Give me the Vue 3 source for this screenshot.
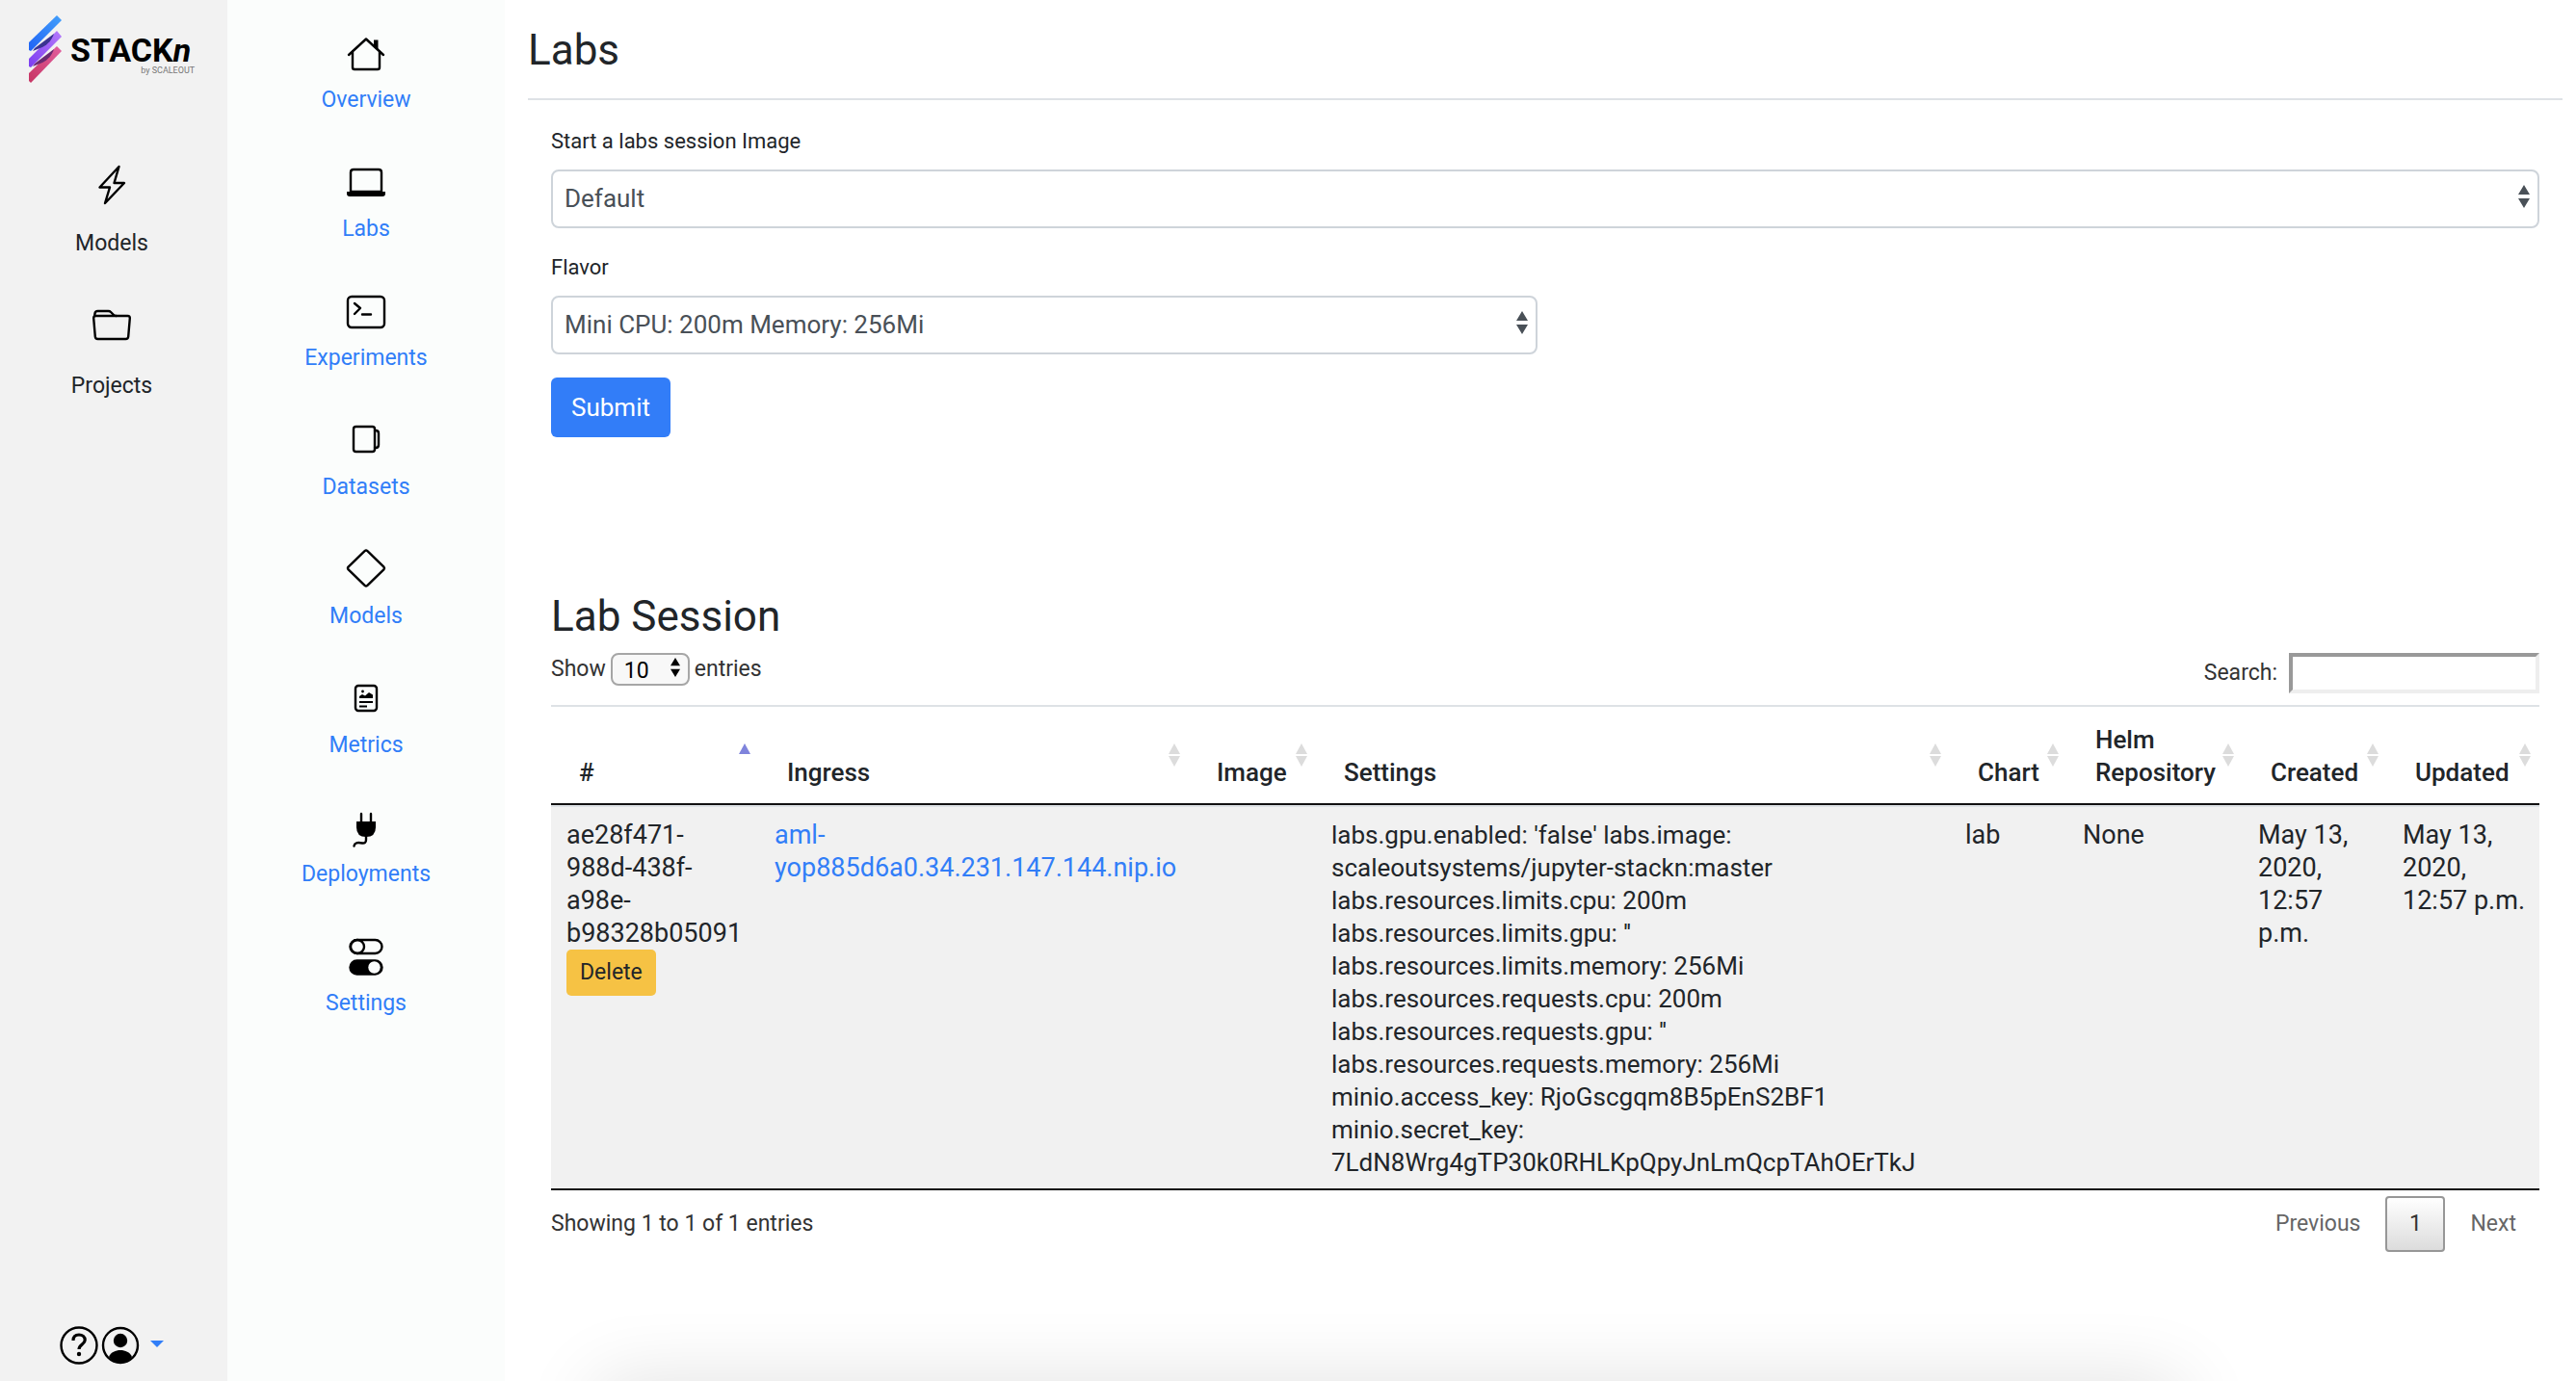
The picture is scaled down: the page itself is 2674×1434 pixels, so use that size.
<script setup>
import { ref } from 'vue'

const image = ref('Default')
const flavor = ref('Mini CPU: 200m Memory: 256Mi')
const pageLength = ref('10')
const search = ref('')

const projectLinks = [
  { label: 'Overview', icon: 'house' },
  { label: 'Labs', icon: 'laptop' },
  { label: 'Experiments', icon: 'terminal' },
  { label: 'Datasets', icon: 'collection' },
  { label: 'Models', icon: 'diamond' },
  { label: 'Metrics', icon: 'card' },
  { label: 'Deployments', icon: 'plug' },
  { label: 'Settings', icon: 'toggles' },
]

const columns = [
  { label: '#', key: 'id', sorted: true },
  { label: 'Ingress', key: 'ingress' },
  { label: 'Image', key: 'image' },
  { label: 'Settings', key: 'settings' },
  { label: 'Chart', key: 'chart' },
  { label: 'Helm\nRepository', key: 'helm' },
  { label: 'Created', key: 'created' },
  { label: 'Updated', key: 'updated' },
]

const sessions = [
  {
    id: 'ae28f471-\n988d-438f-\na98e-\nb98328b05091',
    ingress: 'aml-\nyop885d6a0.34.231.147.144.nip.io',
    image: '',
    settings: [
      "labs.gpu.enabled: 'false' labs.image:",
      'scaleoutsystems/jupyter-stackn:master',
      'labs.resources.limits.cpu: 200m',
      "labs.resources.limits.gpu: ''",
      'labs.resources.limits.memory: 256Mi',
      'labs.resources.requests.cpu: 200m',
      "labs.resources.requests.gpu: ''",
      'labs.resources.requests.memory: 256Mi',
      'minio.access_key: RjoGscgqm8B5pEnS2BF1',
      'minio.secret_key:',
      '7LdN8Wrg4gTP30k0RHLKpQpyJnLmQcpTAhOErTkJ',
    ].join('\n'),
    chart: 'lab',
    helm: 'None',
    created: 'May 13,\n2020,\n12:57\np.m.',
    updated: 'May 13,\n2020,\n12:57 p.m.',
  },
]
</script>

<template>
  <div class="app">
    <aside class="rail">
      <div>
        <a class="brand" href="#" aria-label="STACKn by SCALEOUT">
          <svg class="brand-mark" viewBox="30 14 36 74" aria-hidden="true">
            <defs>
              <linearGradient id="gBlue" x1="0" y1="1" x2="1" y2="0">
                <stop offset="0" stop-color="#1f62f5" /><stop offset="1" stop-color="#43a0fb" />
              </linearGradient>
              <linearGradient id="gPurple" x1="0" y1="1" x2="1" y2="0">
                <stop offset="0" stop-color="#7b3df0" /><stop offset="1" stop-color="#b57bfb" />
              </linearGradient>
              <linearGradient id="gPink" x1="0" y1="1" x2="1" y2="0">
                <stop offset="0" stop-color="#c73563" /><stop offset="1" stop-color="#e2609f" />
              </linearGradient>
            </defs>
            <path d="M59 48l5 5-32 33-2-2v-8z" fill="url(#gPink)" />
            <path d="M36 66l-2 3 10-4c6-3 10-8 12-14z" fill="#6a2a72" />
            <path d="M59 32l5 6-32 32-2-1v-8z" fill="url(#gPurple)" />
            <path d="M36 50l-2 3 10-4c6-3 10-8 12-14z" fill="#3a3391" />
            <path d="M59 16l5 5-32 32-2-1v-8z" fill="url(#gBlue)" />
          </svg>
          <span class="brand-text">
            <span class="brand-name">STACK<i>n</i></span>
            <span class="brand-by">by SCALEOUT</span>
          </span>
        </a>
        <nav class="rail-nav">
          <a class="rail-link" href="#">
            <svg class="icon" viewBox="0 0 40 40" aria-hidden="true">
              <path d="M27.500 1L7.500 22.500H18L13 39 33 18H22.500z" />
            </svg>
            <span>Models</span>
          </a>
          <a class="rail-link" href="#">
            <svg class="icon" viewBox="0 0 40 40" aria-hidden="true">
              <path d="M3.500 8h33q2.500 0 2.300 2.500l-1.600 19q-.2 2.500-2.700 2.500h-29q-2.500 0-2.700-2.500L1.200 10.500Q1 8 3.500 8z" />
              <path d="M2.200 8l.3-2.500Q2.800 3 5.500 3h11q1.500 0 2.500 1l3 3q1 1 2.500 1" />
            </svg>
            <span>Projects</span>
          </a>
        </nav>
      </div>
      <div class="account">
        <a href="#" aria-label="Help">
          <svg class="icon" viewBox="0 0 40 40" aria-hidden="true">
            <circle cx="20" cy="20" r="18.500" />
            <path d="M14 15c0-4 2.500-6 6-6s6.200 2.200 6.200 5.500c0 4.500-6.200 4.500-6.200 9.500" stroke-width="3.200" stroke-linecap="butt" />
            <circle cx="20" cy="29" r="2.200" class="solid" />
          </svg>
        </a>
        <a class="user" href="#" aria-label="Account">
          <svg class="icon" viewBox="0 0 40 40" aria-hidden="true">
            <circle cx="20" cy="20" r="18" />
            <circle cx="20" cy="15" r="7.200" class="solid" />
            <path d="M8 32c2-5 7-7 12-7s10 2 12 7c-3 4-7 5.500-12 5.500S11 36 8 32z" class="solid" />
          </svg>
          <span class="caret"></span>
        </a>
      </div>
    </aside>

    <nav class="project-nav">
      <a v-for="link in projectLinks" :key="link.label" class="project-link" href="#">
        <svg class="icon" viewBox="0 0 40 40" aria-hidden="true">
          <g v-if="link.icon === 'house'">
            <path d="M6 19v17q0 2 2 2h24q2 0 2-2V19M2 23L20 6.500 38 23" />
            <path d="M28 7.500h4.500v10L28 13z" class="solid" />
          </g>
          <g v-else-if="link.icon === 'laptop'">
            <path d="M4 31V11q0-3 3-3h26q3 0 3 3v20z" />
            <path d="M0 31h40v2q0 3-3 3H3q-3 0-3-3z" class="solid" />
          </g>
          <g v-else-if="link.icon === 'terminal'">
            <rect x="1" y="6" width="38" height="32" rx="4" />
            <path d="M8 13l6 5-6 6M16 24.500h9" />
          </g>
          <g v-else-if="link.icon === 'collection'">
            <rect x="7" y="7" width="22" height="26" rx="2.500" />
            <path d="M29 11h1q3 0 3 3v12q0 3-3 3h-1" />
          </g>
          <path v-else-if="link.icon === 'diamond'" d="M18.600 2.200q1.400-1.200 2.800 0l17 16.400q1.200 1.400 0 2.800l-17 16.400q-1.400 1.200-2.800 0l-17-16.400q-1.200-1.400 0-2.800z" />
          <g v-else-if="link.icon === 'card'">
            <rect x="9" y="8" width="22" height="26" rx="3" />
            <path d="M13 21v-2l3-2 3 1.500 4-3.500 4 2.500V21z" class="solid" />
            <circle cx="16.500" cy="14" r="1.400" class="solid" />
            <path d="M13 25h14M13 29.500h8" stroke-width="2" stroke-linecap="butt" />
          </g>
          <g v-else-if="link.icon === 'plug'">
            <path d="M15 7v8M25 7v8M20 30v4q0 4-4 3.500c-5-1-8-.5-8.500 3" />
            <path d="M10 15h20v6q0 10-10 10T10 21z" class="solid" />
          </g>
          <g v-else>
            <rect x="3.500" y="4" width="33" height="14" rx="7" />
            <circle cx="11" cy="11" r="7" />
            <rect x="3.500" y="25.500" width="33" height="14" rx="7" fill="#000" />
            <circle cx="28.500" cy="32.500" r="6.200" fill="#fbfdfc" stroke="none" />
          </g>
        </svg>
        <span>{{ link.label }}</span>
      </a>
    </nav>

    <main class="main">
      <header class="page-head"><h1>Labs</h1></header>

      <div class="content">
        <form class="lab-form" @submit.prevent>
          <div class="field">
            <label for="image">Start a labs session Image</label>
            <div class="select-wrap">
              <select id="image" v-model="image"><option>Default</option></select>
              <svg class="arrows" viewBox="0 0 12 24" aria-hidden="true"><path d="M6 0l6 10H0zM6 24l6-10H0z" /></svg>
            </div>
          </div>
          <div class="field half">
            <label for="flavor">Flavor</label>
            <div class="select-wrap">
              <select id="flavor" v-model="flavor"><option>Mini CPU: 200m Memory: 256Mi</option></select>
              <svg class="arrows" viewBox="0 0 12 24" aria-hidden="true"><path d="M6 0l6 10H0zM6 24l6-10H0z" /></svg>
            </div>
          </div>
          <button class="submit" type="submit">Submit</button>
        </form>

        <h2>Lab Session</h2>
        <div class="tools">
          <label class="length">
            Show
            <span class="select-wrap small">
              <select v-model="pageLength"><option>10</option></select>
              <svg class="arrows" viewBox="0 0 12 24" aria-hidden="true"><path d="M6 0l6 10H0zM6 24l6-10H0z" /></svg>
            </span>
            entries
          </label>
          <label class="search">Search: <input v-model="search" type="search" /></label>
        </div>

        <table>
          <colgroup>
            <col v-for="c in columns" :key="c.key" :class="'col-' + c.key" />
          </colgroup>
          <thead>
            <tr>
              <th v-for="c in columns" :key="c.key" scope="col">
                {{ c.label }}
                <svg class="sort" :class="{ asc: c.sorted }" viewBox="0 0 12 24" aria-hidden="true">
                  <path d="M6 0l6 11H0z" />
                  <path v-if="!c.sorted" d="M6 24l6-11H0z" />
                </svg>
              </th>
            </tr>
          </thead>
          <tbody>
            <tr v-for="s in sessions" :key="s.id">
              <td>{{ s.id }}<button class="delete" type="button">Delete</button></td>
              <td><a href="#">{{ s.ingress }}</a></td>
              <td>{{ s.image }}</td>
              <td class="settings">{{ s.settings }}</td>
              <td>{{ s.chart }}</td>
              <td>{{ s.helm }}</td>
              <td>{{ s.created }}</td>
              <td>{{ s.updated }}</td>
            </tr>
          </tbody>
        </table>

        <footer class="table-foot">
          <span>Showing 1 to 1 of 1 entries</span>
          <div class="pager">
            <button type="button">Previous</button>
            <button type="button" class="current">1</button>
            <button type="button">Next</button>
          </div>
        </footer>
      </div>
    </main>
    <div class="bottom-shade"></div>
  </div>
</template>

<style>
body {
  margin: 0;
  background: #fff;
}
</style>

<style scoped>
.app {
  display: flex;
  min-height: 100vh;
  font-family: Roboto, "Liberation Sans", sans-serif;
  font-size: 26px;
  line-height: 34px;
  color: #212529;
}
a {
  color: #317ef8;
  text-decoration: none;
}
button,
select,
input {
  font: inherit;
  box-sizing: border-box;
  margin: 0;
}
.icon {
  display: block;
  width: 40px;
  height: 40px;
  overflow: visible;
  fill: none;
  stroke: #000;
  stroke-width: 2.4;
  stroke-linecap: round;
  stroke-linejoin: round;
}
.icon .solid {
  fill: #000;
  stroke: none;
}

.rail {
  flex: 0 0 236px;
  box-sizing: border-box;
  display: flex;
  flex-direction: column;
  justify-content: space-between;
  padding: 14px 0 17px;
  background: #f2f2f2;
  font-size: 23px;
}
.brand {
  display: flex;
  padding-left: 30px;
  color: #000;
}
.brand-mark {
  width: 36px;
  height: 74px;
}
.brand-text {
  display: flex;
  flex-direction: column;
  padding: 22px 0 0 7px;
}
.brand-name {
  padding-right: 4px;
  font-size: 34px;
  font-weight: 700;
  line-height: 32px;
}
.brand-by {
  align-self: flex-end;
  font-size: 9px;
  line-height: 10px;
  color: #777;
}
.rail-nav {
  display: flex;
  flex-direction: column;
  gap: 40px;
  padding-top: 84px;
}
.rail-link {
  display: flex;
  flex-direction: column;
  align-items: center;
  gap: 24px;
  height: 108px;
  padding-right: 4px;
  color: #212529;
}
.account {
  display: flex;
  gap: 3px;
  padding-left: 62px;
}
.user {
  display: flex;
  align-items: center;
  gap: 11px;
}
.caret {
  border: 7px solid transparent;
  border-top-color: #317ef8;
  border-bottom-width: 4px;
}

.project-nav {
  flex: 0 0 288px;
  box-sizing: border-box;
  display: flex;
  flex-direction: column;
  gap: 36px;
  padding-top: 34px;
  background: #fbfdfc;
  font-size: 23px;
}
.project-link {
  display: flex;
  flex-direction: column;
  align-items: center;
  gap: 13px;
  height: 98px;
}

.main {
  flex: 1;
  min-width: 0;
  padding: 0 14px 0 24px;
}
.page-head {
  padding: 24px 0 22px;
  border-bottom: 2px solid #dee2e6;
}
h1,
h2 {
  margin: 0;
  font-size: 44px;
  font-weight: 400;
  line-height: 56px;
}
.content {
  padding: 26px 24px 0;
}
.field {
  display: flex;
  flex-direction: column;
  gap: 12px;
  margin-bottom: 24px;
  font-size: 22px;
}
.half {
  width: calc(50% - 8px);
}
.select-wrap {
  position: relative;
  display: block;
  font-size: 26px;
}
.select-wrap select {
  display: block;
  width: 100%;
  height: 61px;
  padding: 0 40px 2px 12px;
  border: 2px solid #ced4da;
  border-radius: 8px;
  background: #fff;
  color: #495057;
  appearance: none;
}
.arrows {
  position: absolute;
  top: 16px;
  right: 10px;
  width: 12px;
  height: 24px;
  fill: #495057;
}
.submit {
  display: block;
  height: 62px;
  padding: 0 21px;
  border: 0;
  border-radius: 6px;
  background: #327df8;
  color: #fff;
}
h2 {
  margin-top: 158px;
}
.tools {
  display: flex;
  justify-content: space-between;
  align-items: flex-start;
  margin: 10px 0 12px;
  font-size: 23px;
  color: #333;
}
.length {
  display: flex;
  gap: 5px;
}
.small {
  width: 82px;
  font-size: 23px;
}
.select-wrap.small select {
  height: 34px;
  padding: 0 0 2px 12px;
  border-color: #a6a6a6;
  background: #f8f8f8;
  color: #000;
}
.small .arrows {
  top: 5px;
  width: 10px;
  height: 20px;
  fill: #000;
}
.search {
  display: flex;
  align-items: center;
  gap: 12px;
}
.search input {
  width: 260px;
  height: 42px;
  border: 4px solid;
  border-color: #999 #eee #eee #999;
  border-radius: 0;
  background: #fff;
  appearance: none;
}

table {
  width: 100%;
  table-layout: fixed;
  border-spacing: 0;
}
.col-id { width: 216px; }
.col-ingress { width: 446px; }
.col-image { width: 132px; }
.col-settings { width: 658px; }
.col-chart { width: 122px; }
.col-helm { width: 182px; }
.col-created { width: 150px; }
.col-updated { width: 158px; }
th {
  position: relative;
  padding: 17px 0 15px 29px;
  border-top: 2px solid #dee2e6;
  border-bottom: 2px solid #111;
  font-weight: 500;
  text-align: left;
  vertical-align: bottom;
  white-space: pre-line;
}
.sort {
  position: absolute;
  top: 38px;
  right: 9px;
  width: 12px;
  height: 24px;
  fill: #dcdcdc;
}
.asc {
  fill: #7f84dc;
}
td {
  padding: 12px 0 10px 16px;
  border-top: 2px solid #dee2e6;
  border-bottom: 2px solid #111;
  background: #f1f1f1;
  font-size: 27px;
  vertical-align: top;
  white-space: pre-line;
}
td.settings {
  font-size: 26px;
}
.delete {
  display: block;
  height: 48px;
  padding: 0 14px;
  border: 0;
  border-radius: 5px;
  background: #f6c244;
  color: #212529;
  font-size: 23px;
}
.table-foot {
  display: flex;
  justify-content: space-between;
  align-items: center;
  margin-top: 6px;
  font-size: 23px;
  color: #333;
}
.pager {
  display: flex;
  gap: 2px;
}
.pager button {
  height: 58px;
  padding: 0 22px;
  border: 2px solid transparent;
  border-radius: 4px;
  background: none;
  color: #666;
}
.pager .current {
  min-width: 62px;
  border-color: #979797;
  background: linear-gradient(#fff, #dcdcdc);
  color: #333;
}
.bottom-shade {
  position: fixed;
  top: 100%;
  left: 620px;
  right: 410px;
  height: 80px;
  box-shadow: 0 0 80px rgba(0, 0, 0, 0.12);
}
</style>
